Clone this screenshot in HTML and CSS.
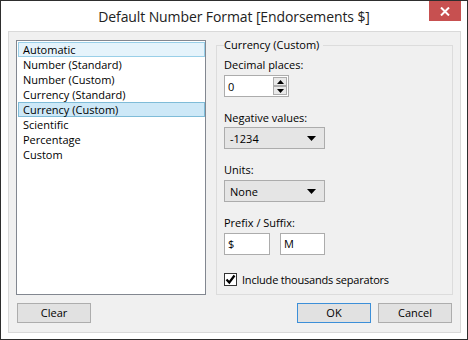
FILE: index.html
```html
<!DOCTYPE html>
<html>
<head>
<meta charset="utf-8">
<link rel="stylesheet" href="styles.css">
</head>
<body>
<div class="window">
  <div class="titlebar">
    <div class="spacer"></div>
    <div class="title">Default Number Format [Endorsements $]</div>
    <div class="close-wrap"><div class="close"><svg width="10" height="9" viewBox="0 0 10 9"><path d="M1 0.5 L9 8.5 M9 0.5 L1 8.5" stroke="#fff" stroke-width="2"/></svg></div></div>
  </div>
  <div class="panel">
    <div class="main">
      <div class="listbox">
        <div class="item focus">Automatic</div>
        <div class="item">Number (Standard)</div>
        <div class="item">Number (Custom)</div>
        <div class="item">Currency (Standard)</div>
        <div class="item selected">Currency (Custom)</div>
        <div class="item">Scientific</div>
        <div class="item">Percentage</div>
        <div class="item">Custom</div>
      </div>
      <fieldset class="group">
        <legend>Currency (Custom)</legend>
        <div class="label">Decimal places:</div>
        <div class="spin">
          <span class="value">0</span>
          <div class="spin-btns">
            <div class="sbtn"><svg width="7" height="4" viewBox="0 0 7 4"><path d="M0 4 L3.5 0 L7 4 Z" fill="#000"/></svg></div>
            <div class="sbtn"><svg width="7" height="4" viewBox="0 0 7 4"><path d="M0 0 L3.5 4 L7 0 Z" fill="#000"/></svg></div>
          </div>
        </div>
        <div class="label gap">Negative values:</div>
        <div class="combo c1"><span>-1234</span><svg width="9" height="5" viewBox="0 0 9 5"><path d="M0 0 L4.5 5 L9 0 Z" fill="#000"/></svg></div>
        <div class="label gap">Units:</div>
        <div class="combo c2"><span>None</span><svg width="9" height="5" viewBox="0 0 9 5"><path d="M0 0 L4.5 5 L9 0 Z" fill="#000"/></svg></div>
        <div class="label gap">Prefix / Suffix:</div>
        <div class="affix">
          <div class="text pre">$</div>
          <div class="text suf">M</div>
        </div>
        <div class="check-row">
          <div class="checkbox"><svg width="11" height="11" viewBox="0 0 11 11"><path d="M1.5 5.5 L4.3 8.5 L9.5 1.5" stroke="#000" stroke-width="2.2" fill="none"/></svg></div>
          <span class="check-label">Include thousands separators</span>
        </div>
      </fieldset>
    </div>
    <div class="buttons">
      <div class="btn">Clear</div>
      <div class="right-btns">
        <div class="btn default">OK</div>
        <div class="btn">Cancel</div>
      </div>
    </div>
  </div>
</div>
</body>
</html>
```
FILE: styles.css
```css
* { box-sizing: border-box; }
html, body { margin: 0; padding: 0; }
body {
  font-family: "Open Sans", "Noto Sans", sans-serif;
  font-size: 11px;
  color: #000;
  background: #fff;
}
.window {
  width: 468px;
  height: 340px;
  border: 1px solid #2e2e2e;
  background: #fff;
  display: flex;
  flex-direction: column;
}
.titlebar {
  height: 30px;
  display: grid;
  grid-template-columns: 1fr auto 1fr;
  align-items: start;
}
.title {
  font-size: 14px;
  color: #222;
  line-height: 18px;
  padding-top: 7px;
  letter-spacing: -0.1px;
}
.close-wrap {
  display: flex;
  justify-content: flex-end;
  padding-right: 6px;
}
.close {
  width: 32px;
  height: 20px;
  background: #c75050;
  display: flex;
  align-items: center;
  justify-content: center;
}
.panel {
  margin: 0 6px 6px 7px;
  flex: 1;
  background: #f0f0f0;
  border: 1px solid #d9d9d9;
  padding: 6px 7px 9px 7px;
  display: flex;
  flex-direction: column;
}
.main {
  display: flex;
  gap: 10px;
  height: 257px;
}
.listbox {
  margin-top: 2px;
  width: 190px;
  height: 255px;
  background: #fff;
  border: 1px solid #828790;
  padding: 1px 0 0 1px;
}
.item {
  height: 15px;
  line-height: 13px;
  padding-left: 4px;
  width: 187px;
  border: 1px solid transparent;
}
.item.focus {
  background: #e5f3fb;
  border-color: #99cfe8;
}
.item.selected {
  background: #cde8f7;
  border-color: #7fbcd8;
}
.group {
  margin: 0;
  width: 237px;
  height: 257px;
  border: 1px solid #dcdcdc;
  padding: 6px 7px 0 7px;
  display: flex;
  flex-direction: column;
  align-items: flex-start;
}
.group legend {
  padding: 0 4px 0 0;
  margin-left: 0;
  line-height: 14px;
}
.label {
  line-height: 14px;
}
.label.gap { margin-top: 14px; }
.spin {
  margin-top: 3px;
  width: 65px;
  height: 22px;
  background: #fff;
  border: 1px solid #acacac;
  display: flex;
  align-items: center;
  justify-content: space-between;
  padding: 0 1px 0 3px;
}
.spin-btns {
  display: flex;
  flex-direction: column;
  gap: 0;
}
.sbtn {
  width: 14px;
  height: 9px;
  background: #e9e9e9;
  border: 1px solid #acacac;
  display: flex;
  align-items: center;
  justify-content: center;
}
.combo {
  margin-top: 2px;
  width: 101px;
  height: 22px;
  background: #e5e5e5;
  border: 1px solid #acacac;
  display: flex;
  align-items: center;
  justify-content: space-between;
  padding: 0 8px 0 5px;
}
.combo.c2 { margin-top: 3px; }
.affix {
  margin-top: 3px;
  display: flex;
  gap: 10px;
}
.text {
  width: 46px;
  height: 22px;
  background: #fff;
  border: 1px solid #acacac;
  line-height: 20px;
  padding-left: 3px;
}
.text.suf { width: 45px; }
.check-row {
  margin-top: 17px;
  display: flex;
  align-items: center;
  gap: 5px;
}
.check-label {
  letter-spacing: -0.2px;
}
.checkbox {
  width: 13px;
  height: 13px;
  border: 1px solid #333;
  background: #fff;
  display: flex;
  align-items: center;
  justify-content: center;
}
.buttons {
  margin-top: 8px;
  display: flex;
  justify-content: space-between;
  padding: 0 1px;
}
.right-btns {
  display: flex;
  gap: 7px;
}
.btn {
  width: 74px;
  height: 20px;
  background: #e1e1e1;
  border: 1px solid #adadad;
  text-align: center;
  line-height: 18px;
}
.btn.default {
  border-color: #3c8fd8;
}
```
